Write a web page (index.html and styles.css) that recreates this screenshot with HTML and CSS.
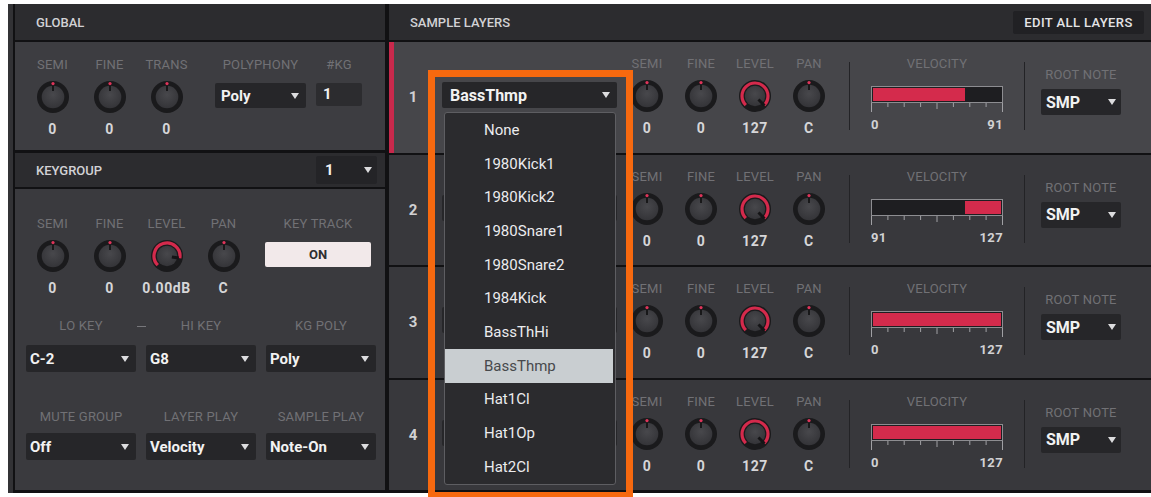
FILE: index.html
```html
<!DOCTYPE html>
<html>
<head>
<meta charset="utf-8">
<title>Keygroup</title>
<link rel="stylesheet" href="styles.css">
</head>
<body>
<svg class="defs" aria-hidden="true">
  <defs>
    <radialGradient id="kgrad" cx="50%" cy="40%" r="60%">
      <stop offset="0" stop-color="#48484c"/>
      <stop offset="1" stop-color="#343438"/>
    </radialGradient>
  </defs>
  <symbol id="knob" viewBox="0 0 32 32">
    <circle cx="16" cy="16" r="16" fill="#1a1a1c"/>
    <circle cx="16" cy="16" r="11.3" fill="url(#kgrad)"/>
    <circle cx="16" cy="2.6" r="1.6" fill="#e0345a"/>
    <rect x="15.1" y="4.6" width="1.8" height="5.4" fill="#141416"/>
  </symbol>
  <symbol id="knob-max" viewBox="0 0 32 32">
    <circle cx="16" cy="16" r="16" fill="#1a1a1c"/>
    <path d="M6.81 25.19 A13 13 0 1 1 25.19 25.19" fill="none" stroke="#d42a4c" stroke-width="3.2"/>
    <circle cx="16" cy="16" r="10.2" fill="url(#kgrad)"/>
    <line x1="19.5" y1="19.5" x2="25.5" y2="25.5" stroke="#141416" stroke-width="3"/>
  </symbol>
  <symbol id="knob-db" viewBox="0 0 32 32">
    <circle cx="16" cy="16" r="16" fill="#1a1a1c"/>
    <path d="M6.81 25.19 A13 13 0 1 1 28.80 18.26" fill="none" stroke="#d42a4c" stroke-width="3.2"/>
    <circle cx="16" cy="16" r="10.2" fill="url(#kgrad)"/>
    <line x1="20.9" y1="16.9" x2="27.8" y2="18.1" stroke="#141416" stroke-width="3"/>
  </symbol>
  <symbol id="ticks" viewBox="0 0 132 9">
    <g stroke="#a0a0a4" stroke-width="1">
      <line x1="0.5" y1="0" x2="0.5" y2="9"/>
      <line x1="16.9" y1="0" x2="16.9" y2="4"/>
      <line x1="33.2" y1="0" x2="33.2" y2="4"/>
      <line x1="49.6" y1="0" x2="49.6" y2="4"/>
      <line x1="66" y1="0" x2="66" y2="6"/>
      <line x1="82.4" y1="0" x2="82.4" y2="4"/>
      <line x1="98.8" y1="0" x2="98.8" y2="4"/>
      <line x1="115.1" y1="0" x2="115.1" y2="4"/>
      <line x1="131.5" y1="0" x2="131.5" y2="9"/>
    </g>
  </symbol>
</svg>

<div class="app">
  <div class="left">
    <div class="head">GLOBAL</div>
    <div class="global">
      <div class="kg"><div class="lbl">SEMI</div><svg class="knob"><use href="#knob"/></svg><div class="val">0</div></div>
      <div class="kg"><div class="lbl">FINE</div><svg class="knob"><use href="#knob"/></svg><div class="val">0</div></div>
      <div class="kg"><div class="lbl">TRANS</div><svg class="knob"><use href="#knob"/></svg><div class="val">0</div></div>
      <div class="field poly-field"><div class="lbl">POLYPHONY</div><div class="dd dd-global">Poly</div></div>
      <div class="field kgnum-field"><div class="lbl">#KG</div><div class="box">1</div></div>
    </div>

    <div class="head head-kg"><span>KEYGROUP</span><div class="dd dd-kg">1</div></div>
    <div class="keygroup">
      <div class="kg-top">
        <div class="kg"><div class="lbl">SEMI</div><svg class="knob"><use href="#knob"/></svg><div class="val">0</div></div>
        <div class="kg"><div class="lbl">FINE</div><svg class="knob"><use href="#knob"/></svg><div class="val">0</div></div>
        <div class="kg"><div class="lbl">LEVEL</div><svg class="knob"><use href="#knob-db"/></svg><div class="val">0.00dB</div></div>
        <div class="kg"><div class="lbl">PAN</div><svg class="knob"><use href="#knob"/></svg><div class="val">C</div></div>
        <div class="field keytrack"><div class="lbl">KEY TRACK</div><div class="on-btn">ON</div></div>
      </div>
      <div class="lbl-row lbl-row1">
        <div class="lbl">LO KEY</div><div class="dash"></div><div class="lbl">HI KEY</div><div></div><div class="lbl">KG POLY</div>
      </div>
      <div class="dd-row dd-row1">
        <div class="dd dd-big">C-2</div><div class="dd dd-big">G8</div><div class="dd dd-big">Poly</div>
      </div>
      <div class="lbl-row lbl-row2">
        <div class="lbl">MUTE GROUP</div><div></div><div class="lbl">LAYER PLAY</div><div></div><div class="lbl">SAMPLE PLAY</div>
      </div>
      <div class="dd-row dd-row2">
        <div class="dd dd-big">Off</div><div class="dd dd-big">Velocity</div><div class="dd dd-big">Note-On</div>
      </div>
    </div>
  </div>

  <div class="right">
    <div class="head head-sl"><span>SAMPLE LAYERS</span><div class="btn">EDIT ALL LAYERS</div></div>

    <div class="layer sel">
      <div class="stripe"></div>
      <div class="num">1</div>
      <div class="dd dd-layer">BassThmp</div>
      <div class="knobs">
        <div class="kg"><div class="lbl">SEMI</div><svg class="knob"><use href="#knob"/></svg><div class="val">0</div></div>
        <div class="kg"><div class="lbl">FINE</div><svg class="knob"><use href="#knob"/></svg><div class="val">0</div></div>
        <div class="kg"><div class="lbl">LEVEL</div><svg class="knob"><use href="#knob-max"/></svg><div class="val">127</div></div>
        <div class="kg"><div class="lbl">PAN</div><svg class="knob"><use href="#knob"/></svg><div class="val">C</div></div>
      </div>
      <div class="vdiv"></div>
      <div class="vel">
        <div class="lbl">VELOCITY</div>
        <div class="bar"><div class="fill" style="margin-left:0%;width:71.7%"></div></div>
        <svg class="ticks"><use href="#ticks"/></svg>
        <div class="vnums"><span>0</span><span>91</span></div>
      </div>
      <div class="vdiv vdiv2"></div>
      <div class="root"><div class="lbl">ROOT NOTE</div><div class="dd dd-root">SMP</div></div>
    </div>

    <div class="layer">
      <div class="stripe"></div>
      <div class="num">2</div>
      <div class="dd dd-layer"></div>
      <div class="knobs">
        <div class="kg"><div class="lbl">SEMI</div><svg class="knob"><use href="#knob"/></svg><div class="val">0</div></div>
        <div class="kg"><div class="lbl">FINE</div><svg class="knob"><use href="#knob"/></svg><div class="val">0</div></div>
        <div class="kg"><div class="lbl">LEVEL</div><svg class="knob"><use href="#knob-max"/></svg><div class="val">127</div></div>
        <div class="kg"><div class="lbl">PAN</div><svg class="knob"><use href="#knob"/></svg><div class="val">C</div></div>
      </div>
      <div class="vdiv"></div>
      <div class="vel">
        <div class="lbl">VELOCITY</div>
        <div class="bar"><div class="fill" style="margin-left:71.7%;width:28.3%"></div></div>
        <svg class="ticks"><use href="#ticks"/></svg>
        <div class="vnums"><span>91</span><span>127</span></div>
      </div>
      <div class="vdiv vdiv2"></div>
      <div class="root"><div class="lbl">ROOT NOTE</div><div class="dd dd-root">SMP</div></div>
    </div>

    <div class="layer">
      <div class="stripe"></div>
      <div class="num">3</div>
      <div class="dd dd-layer"></div>
      <div class="knobs">
        <div class="kg"><div class="lbl">SEMI</div><svg class="knob"><use href="#knob"/></svg><div class="val">0</div></div>
        <div class="kg"><div class="lbl">FINE</div><svg class="knob"><use href="#knob"/></svg><div class="val">0</div></div>
        <div class="kg"><div class="lbl">LEVEL</div><svg class="knob"><use href="#knob-max"/></svg><div class="val">127</div></div>
        <div class="kg"><div class="lbl">PAN</div><svg class="knob"><use href="#knob"/></svg><div class="val">C</div></div>
      </div>
      <div class="vdiv"></div>
      <div class="vel">
        <div class="lbl">VELOCITY</div>
        <div class="bar"><div class="fill" style="margin-left:0%;width:100%"></div></div>
        <svg class="ticks"><use href="#ticks"/></svg>
        <div class="vnums"><span>0</span><span>127</span></div>
      </div>
      <div class="vdiv vdiv2"></div>
      <div class="root"><div class="lbl">ROOT NOTE</div><div class="dd dd-root">SMP</div></div>
    </div>

    <div class="layer">
      <div class="stripe"></div>
      <div class="num">4</div>
      <div class="dd dd-layer"></div>
      <div class="knobs">
        <div class="kg"><div class="lbl">SEMI</div><svg class="knob"><use href="#knob"/></svg><div class="val">0</div></div>
        <div class="kg"><div class="lbl">FINE</div><svg class="knob"><use href="#knob"/></svg><div class="val">0</div></div>
        <div class="kg"><div class="lbl">LEVEL</div><svg class="knob"><use href="#knob-max"/></svg><div class="val">127</div></div>
        <div class="kg"><div class="lbl">PAN</div><svg class="knob"><use href="#knob"/></svg><div class="val">C</div></div>
      </div>
      <div class="vdiv"></div>
      <div class="vel">
        <div class="lbl">VELOCITY</div>
        <div class="bar"><div class="fill" style="margin-left:0%;width:100%"></div></div>
        <svg class="ticks"><use href="#ticks"/></svg>
        <div class="vnums"><span>0</span><span>127</span></div>
      </div>
      <div class="vdiv vdiv2"></div>
      <div class="root"><div class="lbl">ROOT NOTE</div><div class="dd dd-root">SMP</div></div>
    </div>

    <ul class="menu">
      <li class="item">None</li>
      <li class="item">1980Kick1</li>
      <li class="item">1980Kick2</li>
      <li class="item">1980Snare1</li>
      <li class="item">1980Snare2</li>
      <li class="item">1984Kick</li>
      <li class="item">BassThHi</li>
      <li class="item item-hi">BassThmp</li>
      <li class="item">Hat1Cl</li>
      <li class="item">Hat1Op</li>
      <li class="item">Hat2Cl</li>
    </ul>
    <div class="highlight"></div>
  </div>
</div>
</body>
</html>
```

FILE: styles.css
```css
* { box-sizing: border-box; }

html, body {
  margin: 0;
  padding: 0;
  background: #ffffff;
  overflow: hidden;
}

body {
  font-family: Roboto, "Liberation Sans", sans-serif;
  width: 1151px;
  height: 497px;
}

.defs {
  position: absolute;
  width: 0;
  height: 0;
  overflow: hidden;
}

.app {
  margin: 4px 0 0 8px;
  width: 1143px;
  height: 489px;
  display: flex;
  background: #111113;
  border-left: 5px solid #323235;
  padding: 0 0 3px 2px;
}

/* ---------- generic ---------- */
.head {
  height: 36px;
  flex: none;
  display: flex;
  align-items: center;
  padding-left: 21px;
  background: #2c2c2f;
  color: #d2d2d5;
  font-size: 13px;
  font-weight: 500;
}

.lbl {
  font-size: 13px;
  line-height: 14px;
  color: #717175;
  white-space: nowrap;
  text-align: center;
  letter-spacing: 0.2px;
}

.kg {
  width: 57px;
  display: flex;
  flex-direction: column;
  align-items: center;
  flex: none;
}

.knob {
  width: 32px;
  height: 32px;
  margin-top: 9px;
  display: block;
}

.val {
  margin-top: 9px;
  line-height: 14px;
  font-size: 14px;
  font-weight: 700;
  color: #d6d6d8;
  letter-spacing: 0.6px;
  white-space: nowrap;
}

.dd {
  display: flex;
  align-items: center;
  justify-content: space-between;
  background: #262629;
  color: #f2f2f2;
  font-weight: 700;
  font-size: 15px;
  padding: 0 7px 0 6px;
  border-radius: 2px;
  white-space: nowrap;
}

.dd::after {
  content: "";
  margin-left: auto;
  width: 0;
  height: 0;
  border-left: 4px solid transparent;
  border-right: 4px solid transparent;
  border-top: 6px solid #dcdcde;
}

.field {
  display: flex;
  flex-direction: column;
  flex: none;
}

/* ---------- left column ---------- */
.left {
  width: 370px;
  flex: none;
  display: flex;
  flex-direction: column;
}

.global {
  margin-top: 2px;
  height: 108px;
  flex: none;
  background: #3d3d41;
  display: flex;
  align-items: flex-start;
  padding: 16px 0 0 9px;
}

.poly-field {
  margin-left: 20px;
  width: 91px;
}

.dd-global {
  margin-top: 11px;
  height: 25px;
}

.kgnum-field {
  margin-left: 10px;
  width: 46px;
}

.box {
  margin-top: 11px;
  height: 23px;
  background: #2c2c2f;
  color: #f2f2f2;
  font-weight: 700;
  font-size: 15px;
  line-height: 23px;
  padding-left: 7px;
  border-radius: 2px;
}

.head-kg {
  margin-top: 3px;
  height: 34px;
  justify-content: space-between;
  padding-right: 8px;
}

.dd-kg {
  width: 61px;
  height: 28px;
  padding: 0 5px 0 9px;
  font-size: 15px;
  background: #242427;
}

.keygroup {
  margin-top: 2px;
  flex: 1;
  background: #3a3a3e;
  display: flex;
  flex-direction: column;
  padding-top: 28px;
}

.kg-top {
  display: flex;
  align-items: flex-start;
  padding-left: 9px;
}

.keytrack {
  margin-left: 13px;
  width: 106px;
}

.on-btn {
  margin-top: 11px;
  height: 25px;
  background: #f2e9ea;
  color: #2e2e30;
  font-weight: 700;
  font-size: 13px;
  display: flex;
  align-items: center;
  justify-content: center;
  border-radius: 2px;
}

.lbl-row {
  display: grid;
  grid-template-columns: 110px 10px 110px 10px 110px;
  padding-left: 11px;
  align-items: center;
}

.lbl-row1 { margin-top: 24px; }
.lbl-row2 { margin-top: 38px; }

.dash {
  justify-self: center;
  width: 9px;
  height: 1px;
  background: #77777b;
}

.dd-row {
  display: grid;
  grid-template-columns: repeat(3, 110px);
  column-gap: 10px;
  padding-left: 11px;
}

.dd-row1 { margin-top: 12px; }
.dd-row2 { margin-top: 9px; }

.dd-big {
  height: 27px;
  padding-left: 4px;
}

/* ---------- right column ---------- */
.right {
  margin-left: 4px;
  flex: 1;
  display: flex;
  flex-direction: column;
  position: relative;
}

.head-sl {
  justify-content: space-between;
  padding-right: 7px;
}

.btn {
  height: 23px;
  width: 131px;
  background: #212124;
  color: #e4e4e6;
  font-size: 13px;
  font-weight: 500;
  letter-spacing: 0.4px;
  display: flex;
  align-items: center;
  justify-content: center;
  border-radius: 2px;
}

.layer {
  margin-top: 2px;
  flex: 1;
  display: flex;
  align-items: flex-start;
  background: #38383c;
}

.layer.sel {
  background: #46464a;
}

.stripe {
  width: 5px;
  align-self: stretch;
  flex: none;
}

.sel .stripe {
  background: #c8294c;
}

.num {
  width: 38px;
  flex: none;
  align-self: center;
  text-align: center;
  color: #d0d0d2;
  font-weight: 700;
  font-size: 15px;
}

.dd-layer {
  margin-left: 10px;
  margin-top: 40px;
  width: 175px;
  height: 26px;
  padding: 0 7px 0 8px;
  font-size: 16px;
  flex: none;
}

.knobs {
  margin-left: 3px;
  margin-top: 15px;
  display: flex;
  flex: none;
}

.knobs .kg {
  width: 54px;
}

.vdiv {
  margin-left: 13px;
  margin-top: 20px;
  width: 1px;
  height: 68px;
  background: #232326;
  flex: none;
}

.vdiv2 {
  margin-left: 21px;
}

.vel {
  margin-left: 21px;
  margin-top: 15px;
  width: 132px;
  flex: none;
  display: flex;
  flex-direction: column;
}

.bar {
  margin-top: 15px;
  height: 17px;
  border: 1px solid #8d8d91;
  background: #1e1e21;
  padding: 1px;
  display: flex;
}

.fill {
  height: 100%;
  background: #d42b4c;
}

.ticks {
  display: block;
  width: 132px;
  height: 9px;
}

.vnums {
  margin-top: 6px;
  display: flex;
  justify-content: space-between;
  font-size: 13px;
  line-height: 14px;
  font-weight: 700;
  color: #d2d2d4;
  letter-spacing: 0.4px;
}

.root {
  margin-left: 16px;
  margin-top: 26px;
  width: 80px;
  flex: none;
  display: flex;
  flex-direction: column;
}

.dd-root {
  margin-top: 7px;
  height: 26px;
  padding: 0 5px 0 5px;
  font-size: 16px;
}

/* ---------- dropdown menu overlay ---------- */
.menu {
  position: absolute;
  left: 55px;
  top: 108px;
  width: 172px;
  height: 373px;
  margin: 0;
  padding: 0;
  list-style: none;
  background: #2b2b2e;
  border: 1px solid #5e5e62;
  border-radius: 3px;
  z-index: 2;
}

.item {
  height: 33.7px;
  display: flex;
  align-items: center;
  padding-left: 39px;
  font-size: 15px;
  font-weight: 400;
  color: #ececee;
}

.item-hi {
  background: #c9ced1;
  color: #47494c;
  margin-right: 2px;
}

.highlight {
  position: absolute;
  left: 39px;
  top: 66px;
  width: 205px;
  height: 429px;
  border: 7px solid #f7690f;
  z-index: 3;
  pointer-events: none;
}
```
